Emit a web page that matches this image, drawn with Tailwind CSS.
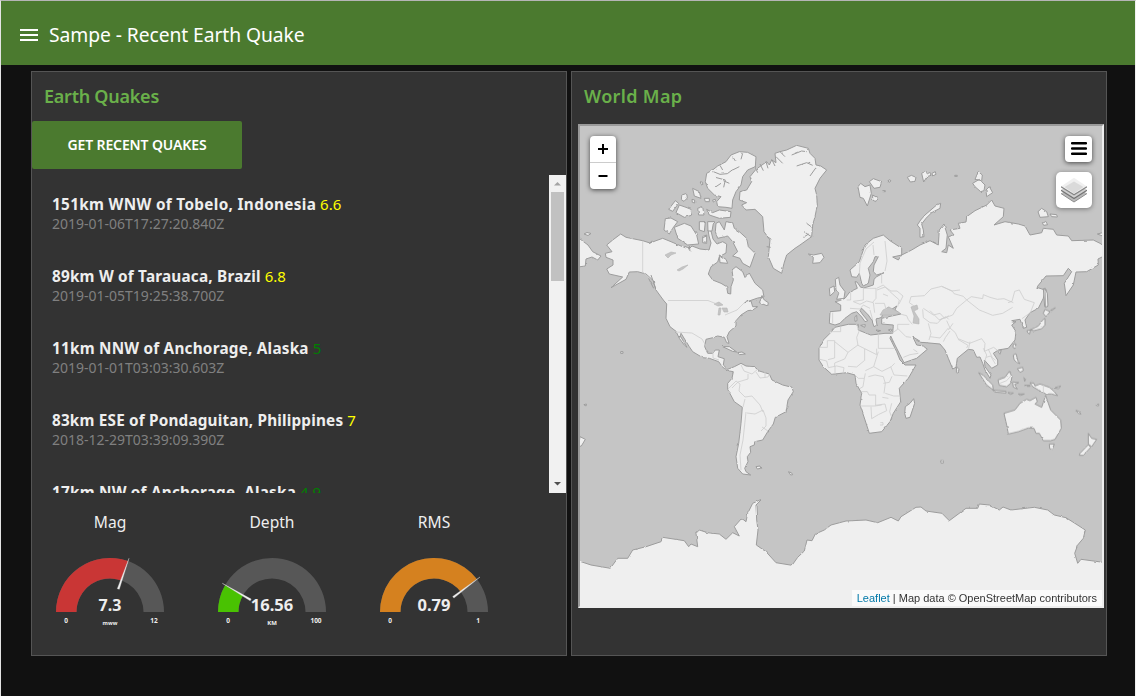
<!DOCTYPE html>
<html lang="en">
<head>
<meta charset="utf-8">
<title>Sampe - Recent Earth Quake</title>
<script src="https://cdn.jsdelivr.net/npm/@tailwindcss/browser@4"></script>
</head>
<body class="h-[696px] w-[1136px] overflow-hidden border-t border-r border-l border-t-[#b5b5b5] border-r-[#f0f0f0] border-l-[#e4e4e4] bg-[#111111] font-['Noto_Sans',sans-serif] text-[#eeeeee]">
<header class="flex h-16 items-center bg-[#4b7a2f] pl-[19px] pt-1 text-white">
  <svg class="mr-[11px] h-3 w-[18px]" viewBox="0 0 18 12" fill="#fff"><path d="M0 0h18v2H0zM0 5h18v2H0zM0 10h18v2H0z"/></svg>
  <h1 class="whitespace-nowrap text-[19.3px] leading-6 tracking-[-0.08px]">Sampe - Recent Earth Quake</h1>
</header>
<main class="flex gap-1 pl-[30px] pt-1.5">
  <section class="flex h-[585px] w-[536px] flex-col border border-[#555555] bg-[#333333]">
    <h2 class="h-[49px] pl-3 pt-3 text-[18px] font-semibold leading-6 tracking-[-0.25px] text-[#6ab04a]">Earth Quakes</h2>
    <button class="h-12 w-[210px] rounded-xs bg-[#4b7a2f] pb-0.5 text-[14px] font-semibold tracking-[-0.12px] text-white">GET RECENT QUAKES</button>
    <div class="mt-1.5 flex h-[318px]">
      <ul class="w-[517px] overflow-hidden pl-5 pt-[19px] whitespace-nowrap">
        <li class="h-[72px]"><p class="text-[15px] leading-5"><b class="text-[15.3px] tracking-[0.33px]">151km WNW of Tobelo, Indonesia</b> <span class="text-[#ffff00]">6.6</span></p><p class="text-[14px] leading-5 text-[#808080]">2019-01-06T17:27:20.840Z</p></li>
        <li class="h-[72px]"><p class="text-[15px] leading-5"><b class="text-[15.3px] tracking-[0.2px]">89km W of Tarauaca, Brazil</b> <span class="text-[#ffff00]">6.8</span></p><p class="text-[14px] leading-5 text-[#808080]">2019-01-05T19:25:38.700Z</p></li>
        <li class="h-[72px]"><p class="text-[15px] leading-5"><b class="text-[15.3px] tracking-[0.22px]">11km NNW of Anchorage, Alaska</b> <span class="text-[#008000]">5</span></p><p class="text-[14px] leading-5 text-[#808080]">2019-01-01T03:03:30.603Z</p></li>
        <li class="h-[72px]"><p class="text-[15px] leading-5"><b class="text-[15.3px] tracking-[0.18px]">83km ESE of Pondaguitan, Philippines</b> <span class="text-[#ffff00]">7</span></p><p class="text-[14px] leading-5 text-[#808080]">2018-12-29T03:39:09.390Z</p></li>
        <li class="h-[72px]"><p class="text-[15px] leading-5"><b class="text-[15.3px] tracking-[0.22px]">17km NW of Anchorage, Alaska</b> <span class="text-[#008000]">4.9</span></p></li>
      </ul>
      <div class="flex w-[17px] flex-col items-center bg-[#f1f1f1]">
        <svg class="h-[17px] w-[17px]" viewBox="0 0 17 17"><path d="M5 10.500 8.500 7l3.500 3.500z" fill="#a3a3a3"/></svg>
        <div class="h-[89px] w-[13px] bg-[#c1c1c1]"></div>
        <svg class="mt-auto h-[17px] w-[17px]" viewBox="0 0 17 17"><path d="M5 6h7l-3.500 3.500z" fill="#505050"/></svg>
      </div>
    </div>
    <div class="mt-[17px] flex text-center text-[15.6px] leading-6">
      <div class="w-[156px]"><h3>Mag</h3>
        <svg class="mx-auto mt-5 h-[80px] w-[120px]" viewBox="-60 -58 120 80" text-anchor="middle" fill="#eee">
          <path d="M-54 0A54 54 0 0 1 54 0H33.500A33.500 33.500 0 0 0-33.500 0z" fill="#575757"/>
          <path d="M-54 0A54 54 0 0 1 18-50.900L11.200-31.600A33.500 33.500 0 0 0-33.500 0z" fill="#c93635"/>
          <path d="M19-53.700 7.300-23.300 9.300-22.700z" stroke="#eee" stroke-width=".3"/>
          <text y="-1.500" class="text-[16px] font-bold">7.3</text>
          <text x="-44" y="11" class="text-[6.500px] font-bold">0</text><text x="44" y="11" class="text-[6.500px] font-bold">12</text><text y="13" class="text-[5.500px] font-bold">mww</text>
        </svg></div>
      <div class="w-[168px]"><h3>Depth</h3>
        <svg class="mx-auto mt-5 h-[80px] w-[120px]" viewBox="-60 -58 120 80" text-anchor="middle" fill="#eee">
          <path d="M-54 0A54 54 0 0 1 54 0H33.500A33.500 33.500 0 0 0-33.500 0z" fill="#575757"/>
          <path d="M-54 0A54 54 0 0 1-46.900-26.800L-29.100-16.600A33.500 33.500 0 0 0-33.500 0z" fill="#49c202"/>
          <path d="M-49.700-28.700-21.800-11.200-20.800-12.900z" stroke="#eee" stroke-width=".3"/>
          <text y="-1.500" class="text-[16.500px] font-bold">16.56</text>
          <text x="-44" y="11" class="text-[6.500px] font-bold">0</text><text x="44" y="11" class="text-[6.500px] font-bold">100</text><text y="13" class="text-[6px] font-bold">KM</text>
        </svg></div>
      <div class="w-[156px]"><h3>RMS</h3>
        <svg class="mx-auto mt-5 h-[80px] w-[120px]" viewBox="-60 -58 120 80" text-anchor="middle" fill="#eee">
          <path d="M-54 0A54 54 0 0 1 54 0H33.500A33.500 33.500 0 0 0-33.500 0z" fill="#575757"/>
          <path d="M-54 0A54 54 0 0 1 42.700-33.100L26.500-20.500A33.500 33.500 0 0 0-33.500 0z" fill="#d5811f"/>
          <path d="M46-35 18.700-15.500 19.900-13.900z" stroke="#eee" stroke-width=".3"/>
          <text y="-1.500" class="text-[16.500px] font-bold">0.79</text>
          <text x="-44" y="11" class="text-[6.500px] font-bold">0</text><text x="44" y="11" class="text-[6.500px] font-bold">1</text>
        </svg></div>
    </div>
  </section>
  <section class="h-[585px] w-[536px] border border-[#555555] bg-[#333333]">
    <h2 class="h-[52px] pl-3 pt-3 text-[18px] font-semibold leading-6 tracking-[0.35px] text-[#6ab04a]">World Map</h2>
    <div class="relative ml-1.5 h-[484px] w-[526px] border-2 border-t-[#9a9a9a] border-r-[#eeeeee] border-b-[#eeeeee] border-l-[#9a9a9a] bg-[#c5c5c5]">
      <svg class="block h-[480px] w-[522px]" viewBox="580 126 522 480" fill="#efefef" stroke="#9c9c9c" stroke-width="1" stroke-linejoin="round">
        <defs><filter id="coast" x="0" y="0" width="1" height="1"><feTurbulence type="fractalNoise" baseFrequency=".2" numOctaves="1" seed="4"/><feDisplacementMap in="SourceGraphic" scale="2.400" xChannelSelector="R" yChannelSelector="G"/></filter></defs>
        <g filter="url(#coast)">
        <!-- Americas -->
        <path d="M620.700 234 626 237.300 642.700 240.700 650 243 656 240.700 662.700 238.300 671 241.700 681 246 689 249 692 246 700 249 709 250 711 243 709 236 708 230 711 231 713 239 717 244 722.700 241.700 726.700 244 726 253 719.300 256.700 717.700 262 711 266.700 708.300 274 712.700 280 721 283.300 726.700 286.700 727.700 293.300 730.700 294 731 286.700 733.300 280 732 270 736 266.700 742.700 271.700 745 277.500 749.300 273 755 283.300 762.700 290 764 297 757.700 298 744.300 302.700 751 301 752.700 306.700 757.700 306.700 752.700 310 747.700 310.700 741 315 736 320.700 736 326 729.300 331.700 727 336.700 729 343.300 726.700 342.700 724.300 337.300 717.700 336 712.700 337.700 706 339.300 704.700 346.700 707.700 353.300 712.700 353.300 715.300 350 719.300 350 718 356.700 724.300 358.700 723.300 365 727.700 369.300 734.300 366.700 741 363.300 746 366 754.300 366.700 759.300 371 769.300 374 772 380 782.700 385 792 387.300 793.300 391.700 788 400 786 411.700 775.300 417.300 773.300 424 767.700 431.700 762.700 440 754.700 441.700 754.300 445 750 446.700 750.700 452.300 747.300 456.700 748 461.700 744.700 468.300 746 471.700 750.700 475 742.700 474 737.700 468.300 736 456.700 738.700 443.300 741 423.300 742.300 407.300 734.300 401.700 727.700 389.300 727.700 383.300 732 378.300 733.300 371.700 729.300 371 722.700 367.300 718.700 361.700 709.300 358.300 702.700 357.700 692.700 351.700 689.300 346.700 681 333.300 680.300 336 687 347.300 684.300 345 679.300 338.300 676 331.300 670 326.700 666 318.300 666.700 304 663.300 300 656 290 652.700 280 646 274 637.700 271.700 629.300 272 626 279.300 611 287.700 622.700 277 609.300 274 606.700 269 613 265 613 260 606 257.300 605.300 253.300 612 251.700 606.700 245 612.700 240z"/>
        <!-- Africa and Eurasia -->
        <path d="M850 270 851.700 276.700 856.700 277.300 859.300 273.300 861.700 283.300 863.300 286 868.300 283.300 870 275 868.300 268.300 873.300 261.700 875 256.700 878.300 256.700 874 265 873.300 271.700 876.700 275 884 272.700 876.700 276.700 874 279.300 873.300 285 865 287.700 860.700 287.300 857 282 855 281.700 857.300 288.300 850 291.700 845 298.300 839.300 300.700 835 301.700 840.700 305 840.700 310.700 830 311.700 829.300 323.300 835 325 840 323.300 845 318.300 851.700 313.300 856.700 311.700 861.700 317 865 321.700 867.700 320.700 863 315 860 310.700 861.700 308.300 868.300 315 871.700 320 874 326.700 877 325 876 319.300 881.700 317.300 883.300 311.700 888.300 307.300 891.700 309.300 896.700 306 895 310 901 314 891.700 316 881.700 318.300 881.700 324 893.300 325 892.700 333.300 885 333.300 870.700 335 858.300 330 858.300 324.300 848.300 324.300 835 327.300 830 333.300 823.300 340 819 348.300 819 360 823.300 366.700 831.700 374.300 846.700 372.700 855 375 856 383.300 861.700 393.300 860 405 865 420 869.300 433.300 881.700 431.700 890 421.700 893.300 413.300 900.700 401.700 899.300 388.300 908.300 378.300 916 365 905 365 900 360 896.700 351.700 890 338.300 890.700 336 895 345 904 362.700 916.700 358.300 927.300 349.300 923.300 346 916.700 345 912.700 336.700 921.700 342.300 940 344 945 350 948.300 358.300 952.700 369 956 367.300 957.300 358.300 968.300 349.300 973.300 350 976.700 357.300 980 357 982.700 363.300 985 370 990 378.300 991 375 985 366.700 984.300 360 991.700 368.300 997.700 365 997.700 360 993.300 353.300 998.300 350 1008.300 348.300 1015 340 1016 331.700 1011.700 325 1016 321.700 1011.700 320.700 1020 319.300 1023.300 328.300 1026.700 327.300 1025 320 1030 312.700 1038.300 308.300 1043.300 298.300 1045 290 1036.700 287.300 1046 276 1063.300 275.700 1068.300 268.300 1071.700 271.700 1064.300 283.300 1066 295.700 1073.300 285 1076 272 1086.700 271.700 1098.300 265 1098 259 1104 256 1104 246 1100 243.300 1093.300 240 1071.700 240.700 1068.300 236 1056.700 235 1053.300 229.300 1043.300 228.300 1041.700 232.700 1030 235 1025 226 1018.300 224 1005 221.700 994 225 1003.300 216.700 1004 208.300 995 206 991.700 200 986.700 205 975 210.700 966.700 216.700 966 222 958.300 223.300 960 228.300 950 230 954 235 948.300 236.700 953.300 248.300 948.300 245 946.700 252.700 941.700 251.700 946 248.300 947.300 235 944 224 939.300 230 938.300 245 930 240.700 920 245 911.700 250 901.700 255 898.300 260 892.700 257 901.700 255 901.700 248.300 890 240.700 883.300 235 873.300 238.300 865 245 859.300 261.700z"/>
        <!-- Chukotka across the date line -->
        <path d="M578 238 580 239 588 245 592.700 251.700 601 256 597.700 260 592 257 586 259 585.300 266 578 267zM584 234l3-1.500 4 1-3 2z"/>
        <!-- Antarctica -->
        <path d="M576 560 591 565 610.300 568.300 617.700 558.300 627.700 558.300 632.700 550 646 546.700 661 541.700 662.700 537.300 684.300 540.700 688.700 546.700 691 544 697.700 546.700 696 533.300 699.300 530 707.700 532.700 719.300 534 726 539.300 732.700 532.700 739.300 536 734.300 526.700 741.700 518.300 746 521.700 747.700 513.300 752.700 503.300 762 499 756 505 756.700 520 758 530 756.300 545 766 551.700 776 562.700 792 565.300 797.700 557.300 804.300 551 807 540 812 540.700 815.300 534 824.300 530 831 525 846 521 866 520 877.700 522.700 891 517.300 898.300 521 901 516.700 916 507.300 921 507 926 511 942 513.300 949.300 520.700 966 508.300 977.700 508.300 979.300 504 989.300 505 999.300 510 1003 507 1011 510 1034.300 507.300 1047.700 510 1054.300 515 1066 517.700 1076 524 1085.300 530 1083.300 538.300 1077.700 545 1074.700 553.300 1077.700 563.300 1081 559.300 1106 562.700V612H576z"/>
        <!-- Canadian Arctic -->
        <g transform="translate(576 120) scale(.33333)" stroke-width="3">
          <path d="M410 150 425 138 450 125 465 105 490 95 515 97 540 110 538 140 515 150 500 170 495 195 480 215 470 240 468 265 450 262 425 260 422 245 435 230 415 225 395 205 388 185 392 160zM365 265 380 260 384 285 368 285zM392 268 410 278 430 270 465 275 463 292 430 295 400 285zM350 205 370 215 375 235 355 228zM385 235h15v10h-12zM318 225l14-5 2 14-10 10-8-5zM278 268 298 242 308 250 290 274zM300 278 310 255 330 262 345 268 350 285 325 292zM268 296 285 294 305 305 290 325 280 342 264 330zM295 322 325 310 345 318 362 345 368 372 335 375 305 355zM370 305 388 305 385 335 370 330zM395 305h18l-5 28h-12zM380 350 392 345 392 370 380 368zM420 310 430 305 445 330 450 305 470 308 475 325 490 335 512 355 517 380 537 400 522 442 500 430 492 415 470 408 485 395 470 365 455 348 425 355 418 335zM430 405 450 418 455 430 432 428zM373 185l7 2v8l-6-4zM348 238l8 2v9l-7-2zM410 240l8-2v8h-6z"/>
          <path fill="none" d="M412 155l20 8 22-2 16-12M418 172l30 8-5 22M440 150l-8-14M470 110l10 16M500 100l-5 18M460 190l-18-8M420 200l15-10M490 140l-20 10M220 372l8-10M340 378l2 16M225 465l14 40M218 475l15 30"/>
        </g>
        <!-- Greenland, Iceland, Svalbard -->
        <g transform="translate(740 120) scale(.33333)" stroke-width="3">
          <path d="M20 210 35 185 30 170 48 148 80 125 88 135 95 120 108 128 105 100 120 95 140 90 170 76 205 85 210 100 225 115 228 135 242 138 260 150 240 175 225 205 230 225 232 255 225 290 218 315 215 350 180 375 165 385 140 405 132 430 125 460 100 445 85 410 90 360 72 335 68 290 45 268 18 270 5 255 20 248-2 240 0 215zM205 402 220 405 245 400 252 412 240 428 218 430 220 415zM354 200 362 190 375 200 390 195 394 220 382 258 370 235 360 232zM388 185 400 176 425 185 420 202 402 205zM398 225l14 8-5 12-9-5zM444 182l6-3 3 4-6 4zM502 172l12-6 14 6-3 12-14 2zM428 212h8v3h-8zM286 478 296 472 300 495 315 515 312 535 290 538 296 520 288 510zM268 505 282 498 284 515 270 528z"/>
          <path fill="none" d="M45 140l8 18M60 132l10 20M78 125l6 20M95 118l10 20M108 110l20 20M120 95l15 15M155 105l30-12 15 2M170 138l30-10 18 8M210 168l18-25M192 335l22 15M200 310l16 12M190 352l16-10M82 350l12 8M80 380l12 2"/>
        </g>
        <!-- Russian Arctic, Kamchatka -->
        <g transform="translate(920 120) scale(.33333)" stroke-width="3">
          <path d="M0 352 0 325-8 315 2 300 15 285 50 255 62 250 60 265 35 278 18 295 5 312 10 330 12 350zM5 160l10-6 8 8 6-6 4 10-12 4-10 16zM36 160l10-5 2 8-10 5zM104 166h8v3h-8zM165 178 175 155 187 165 185 182zM158 190 178 178 195 195 192 212 182 215 165 200zM198 210 208 200 218 218 200 230zM354 275 365 265 380 275 385 290 360 292zM390 282 410 284 412 291 395 290zM367 308l10-4 6 10-12 2zM532 342l16-4v10zM370 506 378 508 382 560 374 560z"/>
        </g>
        <!-- Caribbean, Falklands, Pacific -->
        <g transform="translate(576 290) scale(.33333)" stroke-width="3">
          <path d="M440 170 460 170 482 186 470 184zM485 188 498 186 508 192 490 194zM550 38 558 20 565 30 577 38 575 48zM540 530l12-2 2 7-10 2zM638 546l8 2 4 6-6 1zM134 185h7v5h-7zM12 440l16 8-12 20-8 2zM24 344l7-2v5h-5z"/>
        </g>
        <!-- Madagascar, Mediterranean islands -->
        <g transform="translate(800 270) scale(.33333)" stroke-width="3"><path d="M316 410 330 400 341 386 344 400 330 442 318 445 314 430zM165 140l5-4 1 16-6 2zM182 166l14-2-2 8zM228 180l14 2-8 3zM265 180l12-4-4 8z"/></g>
        <!-- East Asia and Oceania -->
        <g transform="translate(930 270) scale(.33333)" stroke-width="3">
          <path d="M222 430 255 420 270 400 290 388 300 392 318 382 322 395 315 402 335 412 347 376 355 400 362 420 392 450 394 475 375 508 362 512 340 512 328 490 318 490 312 475 295 474 265 485 235 492 230 465zM358 522h15l-6 16-8-2zM475 490 485 505 500 508 485 530 475 522zM450 550 475 524 482 532 460 556 448 556zM146 308 160 316 188 345 190 360 170 345zM188 360 228 364 228 369 195 366zM204 330 225 322 238 304 246 320 242 340 230 350 208 346zM248 336l18 2-12 5 8 14-12-6zM234 368l16 1-8 4zM265 372h18l-12 4zM250 255l8-4 6 22 6 8-10-4-8-8zM262 296l16-4 2 10-10 5zM282 324l5 4-3 6zM284 346h16v3h-14zM300 338 312 340 315 348 330 342 358 352 370 362 383 377 365 372 348 372 325 360 308 350zM372 354 392 348 386 356zM80 290l7 8-2 8-6-2zM250 222l8 0-3 14-6-4zM204 244l10-4-4 12zM291 182l10-2-2 12-6-4zM300 180 325 168 338 150 345 145 345 165 335 176 312 182zM340 130 345 118 360 125 348 140zM345 55 352 70 354 108 346 112zM362 121l14-8-8 8zM438 421l10 4 5 7-8-2zM498 404l8-2v5h-6zM32 572h8v7h-7z"/>
        </g>
        </g>
        <!-- Lakes and inland seas -->
        <g fill="#c5c5c5" stroke="#b5b5b5" stroke-width=".6">
          <path d="M911 307 917 305 918 309 914 311 919 319 919 324 913 323 914 316zM714 304l5-2 4 3-5 1zM719 308l2 0-1 7h-2zM722 308l5 0 1 4-4 0zM665 255l6-3 5 1-5 2-3 3zM677 270l5-3 6-2-5 4-4 2zM880 315l3-5 6-3 11 6-6 2z"/>
        </g>
        <!-- National borders -->
        <g fill="none" stroke="#cdcdcd" stroke-width=".8">
          <path d="M642.700 241v31l8 7M668 300.500h40l10 4M725 315l12-5 8-8M676 332l16 1 10 6 4 7M713 353v5l6 2M741 365l3 6 8 3 6-5M748 374v5l-10 3-6 6M756 372l4 6 8-1 2-4M728 389l8-8 4 3-1 7 6 6 7-1 8 9 3 7M743 407l2-8M746 412l-3 28-3 15 1 15M747 413l8 1 8-4 3 8 0 8-5 5M762 427l6 4M765 378v-6"/>
          <g transform="translate(800 270) scale(.33333)" stroke-width="2.400">
            <path d="M90 185h32v-15M57 232h25v-20h22v52l-20 5M104 215l40 32 30-22M144 247l-10 20-30 12v10M168 160l10 22-8 20 4 24 20 10 36 18v-18M235 190v45h52M235 245l-14 45-25 12M194 236v35l-24 20-26-2M60 268l20 5 5 20 25-5 22 5-3 18M105 290v22M165 315l10 10h18l3-15M221 290l25 14 28-14 10-10M272 290l10 25 40 3M193 325l-4 25-10 6M205 320l20-5 25 5 6 20-4 30M182 365h20l5 10h20v30M250 340l18-3 8-18M256 370l25 8 20 0M180 408h45l20-3M213 410l2 36M215 446l20-12 25-12-5-20-30 4M265 385l-18-3M240 465h9v-7h-8M275 400l-6 25 5 14M152 62v28h-12M190 52v38l-30 4M190 55h38v30l-10 12M160 95l20 8 20-10 20 5 4 30M150 115l30 2 10-12 20 10M225 100h28l6 20M230 55l20-10 20 20 28 25-5 20M245 10v30M98 128v32M210 120l8 30M328 98l5-18 40-3 20-20 32-8 30 14 25-3M328 98l14 10M370 115l30 20 20-5 14 15 12-8M368 118l2 25 20 15 22 2 15-15M275 190l18-12v-15h35M293 175l25 25 15 2M310 262l20-8 25-4M385 160l8 30-6 20M390 200l30 4 25-30M445 180l14-20M300 132l20 5 5 12 12 14M340 238l12 8"/>
          </g>
          <g transform="translate(930 270) scale(.33333)" stroke-width="2.400">
            <path d="M35 49l32 14 5 8 28 8 10 11M110 90l14-10 34 6 2-12 20 8 22 6 20-2 28 12M110 90l38 30 40 16 30-6 30-18M110 90l-30 25-12 20-40 15-28-28M234 98l12-4 8-30 14-4 15 28 30 10-12 30-25 18M50 152l10 22 16 14 8 18 35 14 36-14 10 14-2 24 14-6 14-6 18 14M40 215l6-12 14-20M84 208l30 18-4 8M120 215l-4 20M160 235l10 20-6 20M175 238l12 25 10 8M168 262l14-4 14 24M340 345v26M210 340l20-8 14-16M28 150l20-10 8 8"/>
          </g>
          <path d="M859 279l1-16 6-14 8-7M874 255l-1-10M885 271l2-10-2-20M877 290l8-3 6 4 6 0 6 5-4 8M888 296l-5-2"/>
        </g>
      </svg>
      <div class="absolute top-[10px] left-[10px] h-[53px] w-[26px] rounded-sm bg-white shadow-[0_1px_5px_rgba(0,0,0,0.65)]">
        <div class="flex h-[27px] items-center justify-center border-b border-[#cccccc]"><svg class="h-[10px] w-[10px]" viewBox="0 0 10 10"><path d="M0 4h10v2H0zM4 0h2v10H4z"/></svg></div>
        <div class="flex h-[26px] items-center justify-center"><svg class="h-[10px] w-[10px]" viewBox="0 0 10 10"><path d="M.5 4h9v2h-9z"/></svg></div>
      </div>
      <div class="absolute top-[10px] right-[10px] flex h-[26px] w-[27px] items-center justify-center rounded-sm bg-white pb-px shadow-[0_1px_5px_rgba(0,0,0,0.65)]"><svg class="h-[13px] w-4" viewBox="0 0 16 13"><path d="M1 1.300h14M1 6.500h14M1 11.700h14" stroke="#000" stroke-width="2.400" stroke-linecap="round"/></svg></div>
      <div class="absolute top-[46px] right-[10px] flex h-9 w-9 items-center justify-center rounded-[5px] bg-white shadow-[0_1px_5px_rgba(0,0,0,0.4)]">
        <svg class="h-[26px] w-[26px]" viewBox="0 0 26 26"><path d="M0 16.500 13 8l13 8.500L13 25z" fill="#b9b9b9"/><path d="M0 16.500 13 25l13-8.500" fill="none" stroke="#8c8c8c"/><path d="M0 13 13 5l13 8-13 8.500z" fill="#d0d0d0"/><path d="M0 13.200 13 21.500l13-8.300" fill="none" stroke="#747474" stroke-width="1.200"/><path d="M0 9.500 13 .8 26 9.500 13 17.500z" fill="#f0f0f0"/><path d="M3.500 10 13 4.500l9.500 5.500-9.500 6.500z" fill="#dadada"/><path d="M0 9.700 13 17.800 26 9.700" fill="none" stroke="#858585" stroke-width="1.200"/></svg>
      </div>
      <div class="absolute right-0 bottom-0 h-4 bg-white/70 px-[5px] font-['Liberation_Sans',Arial,sans-serif] text-[11px] leading-4 whitespace-nowrap text-[#333333]"><span class="text-[#0078a8]">Leaflet</span> | Map data © OpenStreetMap contributors</div>
    </div>
  </section>
</main>
</body>
</html>
